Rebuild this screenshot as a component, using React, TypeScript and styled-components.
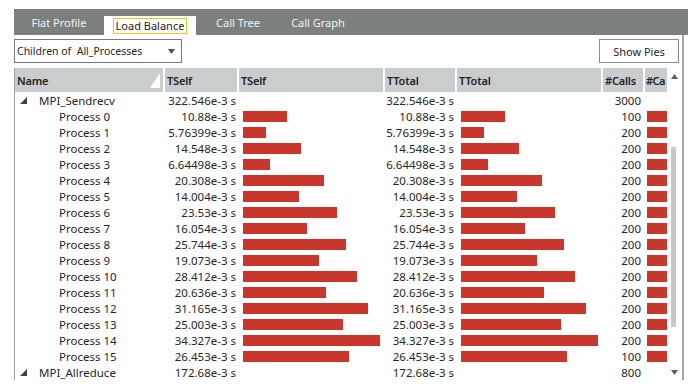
import React from "react";
import styled, { createGlobalStyle } from "styled-components";

const GlobalStyle = createGlobalStyle`
  html, body {
    margin: 0;
    padding: 0;
    background: #ffffff;
  }
  body {
    font-family: "Noto Sans", "Liberation Sans", sans-serif;
    font-size: 11.5px;
    color: #262626;
  }
`

const Page = styled.div`
  width: 688px;
  height: 384px;
  padding: 9px 0 0 14px;
  box-sizing: border-box;
  overflow: hidden;
`
const TabBar = styled.div`
  height: 26px;
  background: #7b807e;
  display: flex;
  align-items: flex-end;
`
const Tab = styled.div<{ $active?: boolean; $w: number }>`
  width: ${p => p.$w}px;
  height: ${p => (p.$active ? 19 : 26)}px;
  display: flex;
  align-items: center;
  justify-content: center;
  font-size: 11px;
  background: ${p => (p.$active ? "#ffffff" : "transparent")};
  color: ${p => (p.$active ? "#1e1e1e" : "#f2f2f2")};
  box-sizing: border-box;
`
const Focus = styled.span`
  border: 1.5px solid #f0c419;
  padding: 0 2px;
  line-height: 14px;
`
const Panel = styled.div`
  width: 670px;
  height: 345px;
  border-right: 2px solid #a3a6a5;
  box-sizing: border-box;
  display: flex;
  flex-direction: column;
`
const Toolbar = styled.div`
  display: flex;
  justify-content: space-between;
  align-items: center;
  padding: 4px 3px 0 0;
  height: 24px;
`
const Select = styled.div`
  width: 168px;
  height: 24px;
  box-sizing: border-box;
  border: 1px solid #7a7a7a;
  display: flex;
  align-items: center;
  justify-content: space-between;
  padding: 0 6px 0 2px;
  font-size: 10.5px;
`
const Button = styled.div`
  width: 80px;
  height: 24px;
  box-sizing: border-box;
  border: 1px solid #8c8c8c;
  display: flex;
  align-items: center;
  justify-content: center;
  font-size: 11px;
`
const Grid = styled.div`
  margin-top: 5px;
  display: flex;
  border-left: 1px solid #a0a0a0;
  height: 312px;
`
const Table = styled.div`
  width: 652px;
  overflow: hidden;
`
const Row = styled.div<{ $head?: boolean }>`
  display: grid;
  grid-template-columns: 150px 74px 146px 72px 146px 42px 22px;
  height: ${p => (p.$head ? 24 : 16)}px;
  align-items: center;
`
const Head = styled.div<{ $last?: boolean }>`
  height: 24px;
  background: #c9cdcd;
  border-right: ${p => (p.$last ? 0 : 2)}px solid #ffffff;
  font-weight: 600;
  font-size: 11px;
  letter-spacing: ${p => (p.$last ? -0.5 : -0.2)}px;
  color: #222;
  display: flex;
  align-items: center;
  justify-content: space-between;
  padding: 0 0 0 ${p => (p.$last ? 1 : 2)}px;
  box-sizing: border-box;
  overflow: hidden;
  white-space: nowrap;
`
const NameCell = styled.div<{ $child?: boolean }>`
  display: flex;
  align-items: center;
  padding-left: ${p => (p.$child ? 44 : 5)}px;
  gap: 12px;
  white-space: nowrap;
`
const Num = styled.div<{ $pad?: number }>`
  text-align: right;
  padding-right: ${p => p.$pad ?? 3}px;
  white-space: nowrap;
`
const BarCell = styled.div<{ $left?: number }>`
  height: 16px;
  display: flex;
  align-items: center;
  padding-left: ${p => p.$left ?? 4}px;
  overflow: hidden;
`
const Bar = styled.div`
  height: 11px;
  background: #c9372c;
  flex: none;
`
const Scroll = styled.div`
  width: 14px;
  position: relative;
  display: flex;
  flex-direction: column;
  align-items: center;
  justify-content: space-between;
  padding: 6px 0 5px;
  box-sizing: border-box;
`
const Thumb = styled.div`
  position: absolute;
  left: 4px;
  top: 79px;
  width: 5px;
  height: 180px;
  background: #c8c8c8;
`

const Tri = ({ dir, color }: { dir: "up" | "down"; color: string }) => (
  <svg width="7" height="5" viewBox="0 0 7 5">
    <polygon points={dir === "up" ? "3.5,0 7,5 0,5" : "0,0 7,0 3.5,5"} fill={color} />
  </svg>
)

const Expander = () => (
  <svg width="7" height="7" viewBox="0 0 7 7">
    <polygon points="7,0 7,7 0,7" fill="#404040" />
  </svg>
)

const procs: [number, string, number][] = [
  [10.88, "10.88e-3 s", 100],
  [5.76399, "5.76399e-3 s", 200],
  [14.548, "14.548e-3 s", 200],
  [6.64498, "6.64498e-3 s", 200],
  [20.308, "20.308e-3 s", 200],
  [14.004, "14.004e-3 s", 200],
  [23.53, "23.53e-3 s", 200],
  [16.054, "16.054e-3 s", 200],
  [25.744, "25.744e-3 s", 200],
  [19.073, "19.073e-3 s", 200],
  [28.412, "28.412e-3 s", 200],
  [20.636, "20.636e-3 s", 200],
  [31.165, "31.165e-3 s", 200],
  [25.003, "25.003e-3 s", 200],
  [34.327, "34.327e-3 s", 200],
  [26.453, "26.453e-3 s", 100],
]

function ParentRow({ name, time, calls }: { name: string; time: string; calls: number }) {
  return (
    <Row>
      <NameCell>
        <Expander />
        <span>{name}</span>
      </NameCell>
      <Num>{time}</Num>
      <div />
      <Num>{time}</Num>
      <div />
      <Num $pad={4}>{calls}</Num>
      <div />
    </Row>
  )
}

export default function App() {
  return (
    <Page>
      <GlobalStyle />
      <TabBar>
        <Tab $w={90}>Flat Profile</Tab>
        <Tab $w={92} $active>
          <Focus>Load Balance</Focus>
        </Tab>
        <Tab $w={84}>Call Tree</Tab>
        <Tab $w={76}>Call Graph</Tab>
      </TabBar>
      <Panel>
        <Toolbar>
          <Select>
            <span>Children of&nbsp; All_Processes</span>
            <Tri dir="down" color="#505050" />
          </Select>
          <Button>Show Pies</Button>
        </Toolbar>
        <Grid>
          <Table>
            <Row $head>
              <Head>
                Name
                <svg width="11" height="15" viewBox="0 0 11 15" style={{ marginRight: 2 }}>
                  <polygon points="10,0 10,15 0,15" fill="#ffffff" />
                </svg>
              </Head>
              <Head>TSelf</Head>
              <Head>TSelf</Head>
              <Head>TTotal</Head>
              <Head>TTotal</Head>
              <Head>#Calls</Head>
              <Head $last>#Ca</Head>
            </Row>
            <ParentRow name="MPI_Sendrecv" time="322.546e-3 s" calls={3000} />
            {procs.map(([v, s, c], i) => (
              <Row key={i}>
                <NameCell $child>Process {i}</NameCell>
                <Num>{s}</Num>
                <BarCell>
                  <Bar style={{ width: Math.round(v * 4) }} />
                </BarCell>
                <Num>{s}</Num>
                <BarCell>
                  <Bar style={{ width: Math.round(v * 4) }} />
                </BarCell>
                <Num $pad={4}>{c}</Num>
                <BarCell $left={2}>
                  <Bar style={{ width: 30 }} />
                </BarCell>
              </Row>
            ))}
            <ParentRow name="MPI_Allreduce" time="172.68e-3 s" calls={800} />
          </Table>
          <Scroll>
            <Tri dir="up" color="#606060" />
            <Thumb />
            <Tri dir="down" color="#606060" />
          </Scroll>
        </Grid>
      </Panel>
    </Page>
  )
}
